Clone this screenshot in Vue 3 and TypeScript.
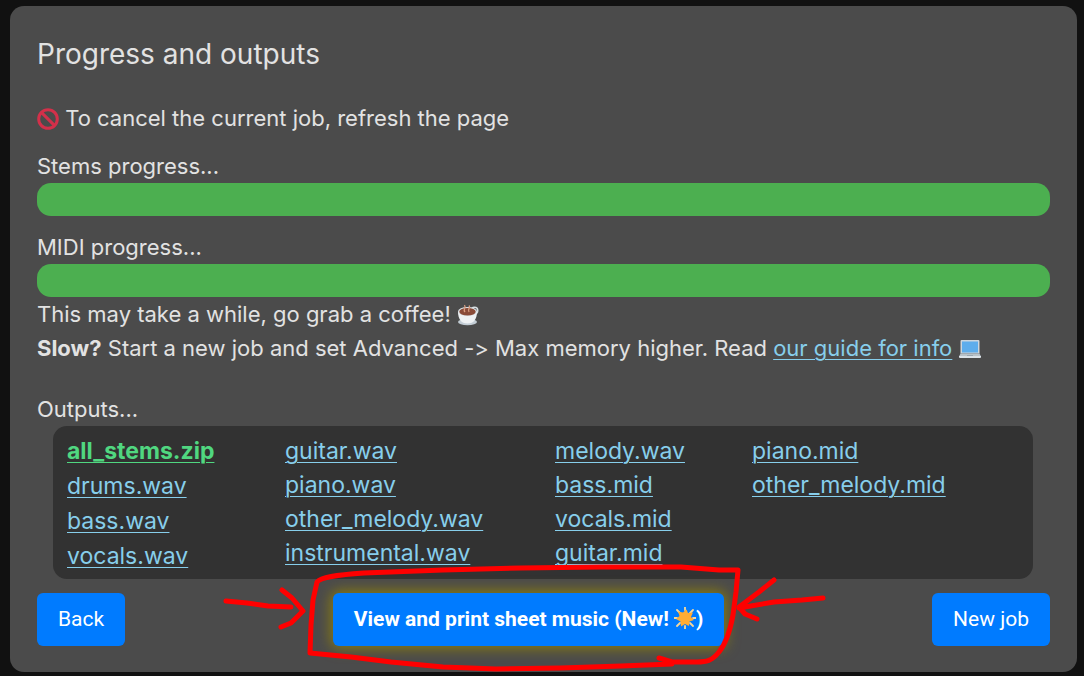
<script setup lang="ts">
interface OutputFile {
  name: string
  archive?: boolean
}

const progress = [
  { id: 'stems', label: 'Stems progress...', value: 100 },
  { id: 'midi', label: 'MIDI progress...', value: 100 },
]

const columns: OutputFile[][] = [
  [{ name: 'all_stems.zip', archive: true }, { name: 'drums.wav' }, { name: 'bass.wav' }, { name: 'vocals.wav' }],
  [{ name: 'guitar.wav' }, { name: 'piano.wav' }, { name: 'other_melody.wav' }, { name: 'instrumental.wav' }],
  [{ name: 'melody.wav' }, { name: 'bass.mid' }, { name: 'vocals.mid' }, { name: 'guitar.mid' }],
  [{ name: 'piano.mid' }, { name: 'other_melody.mid' }],
]
</script>

<template>
  <main class="card">
    <h1>Progress and outputs</h1>

    <p class="notice">
      <svg class="emoji" viewBox="0 0 22 22" aria-hidden="true">
        <circle cx="11" cy="11" r="9.3" fill="none" stroke="#d3304a" stroke-width="3" />
        <path d="M4.6 4.6 17.4 17.4" stroke="#d3304a" stroke-width="3" />
      </svg>
      To cancel the current job, refresh the page
    </p>

    <div v-for="item in progress" :key="item.id" class="progress">
      <span :id="item.id" class="label">{{ item.label }}</span>
      <div class="track" role="progressbar" :aria-labelledby="item.id" :aria-valuenow="item.value">
        <div class="fill" :style="{ width: item.value + '%' }"></div>
      </div>
    </div>

    <p>
      This may take a while, go grab a coffee!
      <svg class="emoji" viewBox="0 0 22 22" aria-hidden="true">
        <ellipse cx="10.5" cy="18" rx="9.5" ry="3.2" fill="#c3cdd5" />
        <circle cx="17.5" cy="6.5" r="3.2" fill="none" stroke="#d7dfe4" stroke-width="1.6" />
        <path d="M1 7.5C1 15 4 19.5 10.5 19.5S20 15 20 7.5Z" fill="#eef1f3" />
        <ellipse cx="10.5" cy="7.5" rx="9.5" ry="4.6" fill="#dce2e6" />
        <ellipse cx="10.5" cy="7.8" rx="8.2" ry="3.8" fill="#8a4b38" />
        <path d="M8 8C5.500 5 9.500 4 7.500 1M12 8c-2-3 2-4 0-6.500" fill="none" stroke="#d99e82" stroke-width="1.300" />
      </svg>
    </p>
    <p>
      <strong>Slow?</strong> Start a new job and set Advanced -&gt; Max memory higher. Read
      <a href="#guide">our guide for info</a>{{ ' ' }}
      <svg class="emoji" viewBox="0 0 22 22" aria-hidden="true">
        <path d="M2.500 2h17q1 0 1 1v12.500h-19V3q0-1 1-1Z" fill="#ccd6dd" />
        <path d="M3 3.500h16v11H3Z" fill="#5dadec" />
        <path d="M1.500 15.500h19l1.500 3H0Z" fill="#b8c2c9" />
        <path d="M0 18h22v1q0 1-1 1H1q-1 0-1-1Z" fill="#dce3e8" />
        <path d="M8 17h6v1H8Z" fill="#99a6af" />
      </svg>
    </p>

    <h2>Outputs...</h2>
    <div class="outputs">
      <ul v-for="(files, i) in columns" :key="i">
        <li v-for="file in files" :key="file.name">
          <a :href="'#' + file.name" :class="{ archive: file.archive }">{{ file.name }}</a>
        </li>
      </ul>
    </div>

    <div class="actions">
      <button type="button">Back</button>
      <div class="featured">
        <button type="button" class="primary">
          View and print sheet music (New!
          <svg class="star" viewBox="0 0 22 22" aria-hidden="true">
            <path d="M11 0v3M11 19v3M0 11h3M19 11h3M3 3l3 3M16 16l3 3M19 3l-3 3M6 16l-3 3" stroke="#f6d79b" stroke-width="1.800" stroke-linecap="round" />
            <path d="m12.500 2.500 1.500 3.500 5-.5-2 4.500 3 3-4.500 1.500-.5 4.500-4-2-4 2.500-.5-5L2 12l3.500-3L4 4.500l5 1Z" fill="#ffac33" />
          </svg>)
        </button>
        <svg class="marker" viewBox="220 560 610 116" aria-hidden="true">
          <path d="M225 601 246 603 267 606 290 607M281 590 291 598 302 611 290 623 280 627" />
          <path d="M309 653 310 625 312 600 316 582C320 577 334 575 363 573L442 570 520 568 600 567 680 567 718 570 737 570 735 592 732 615C728 637 722 647 718 652 711 661 705 662 696 662L671 662 658 658M309 653 350 657 390 662 442 667 495 669 560 668 620 666 671 664" />
          <path d="M822 598 801 600 773 602 738 608M773 580 758 592 738 607 744 614 756 619" />
        </svg>
      </div>
      <button type="button">New job</button>
    </div>
  </main>
</template>

<style>
body {
  background: #111;
}
</style>

<style scoped>
.card {
  margin: 6px 7px 4px 10px;
  padding: 27px 27px 26px;
  border-radius: 14px;
  background: #4b4b4b;
  color: #e2e2e2;
  font-family: Inter, "Open Sans", sans-serif;
  font-size: 22px;
  font-variant-ligatures: none;
  line-height: 34px;
}

h1,
h2,
p,
ul {
  margin: 0;
  padding: 0;
  font-weight: 400;
}

h1 {
  font-size: 28px;
  line-height: 42px;
}

h2 {
  margin-top: 27px;
  font-size: 22px;
}

.notice {
  margin-top: 26px;
}

.emoji {
  width: 22px;
  height: 22px;
  vertical-align: -4px;
}

.progress {
  margin-top: 14px;
}

.label {
  display: block;
}

.track {
  height: 33px;
  border-radius: 14px;
  overflow: hidden;
  background: #333;
}

.fill {
  height: 100%;
  background: #4caf50;
}

a {
  color: #87ceeb;
  text-decoration-thickness: 1px;
  text-underline-offset: 3px;
}

.outputs {
  display: grid;
  grid-template-columns: 218fr 270fr 197fr 267fr;
  margin: 0 17px 0 16px;
  padding: 8px 14px 5px;
  border-radius: 14px;
  background: #323232;
  font-size: 23px;
}

ul {
  list-style: none;
}

ul:first-child {
  line-height: 35px;
}

.archive {
  color: #50d780;
  font-weight: 700;
}

.actions {
  display: flex;
  justify-content: space-between;
  margin-top: 14px;
}

button {
  height: 53px;
  padding: 0 21px 2px;
  border: 0;
  border-radius: 6px;
  background: #007bff;
  color: #fff;
  font: 400 21px Roboto, "Noto Sans", sans-serif;
  white-space: nowrap;
}

.featured {
  position: relative;
}

.primary {
  font-weight: 700;
  box-shadow: 0 0 14px 2px rgb(150 135 0 / 85%);
}

.star {
  width: 22px;
  height: 22px;
  vertical-align: -3px;
}

.marker {
  position: absolute;
  top: -33px;
  left: 50%;
  width: 610px;
  height: 116px;
  margin-left: -308px;
  pointer-events: none;
  fill: none;
  stroke: #f00;
  stroke-width: 5;
  stroke-linejoin: round;
  stroke-linecap: round;
}
</style>
